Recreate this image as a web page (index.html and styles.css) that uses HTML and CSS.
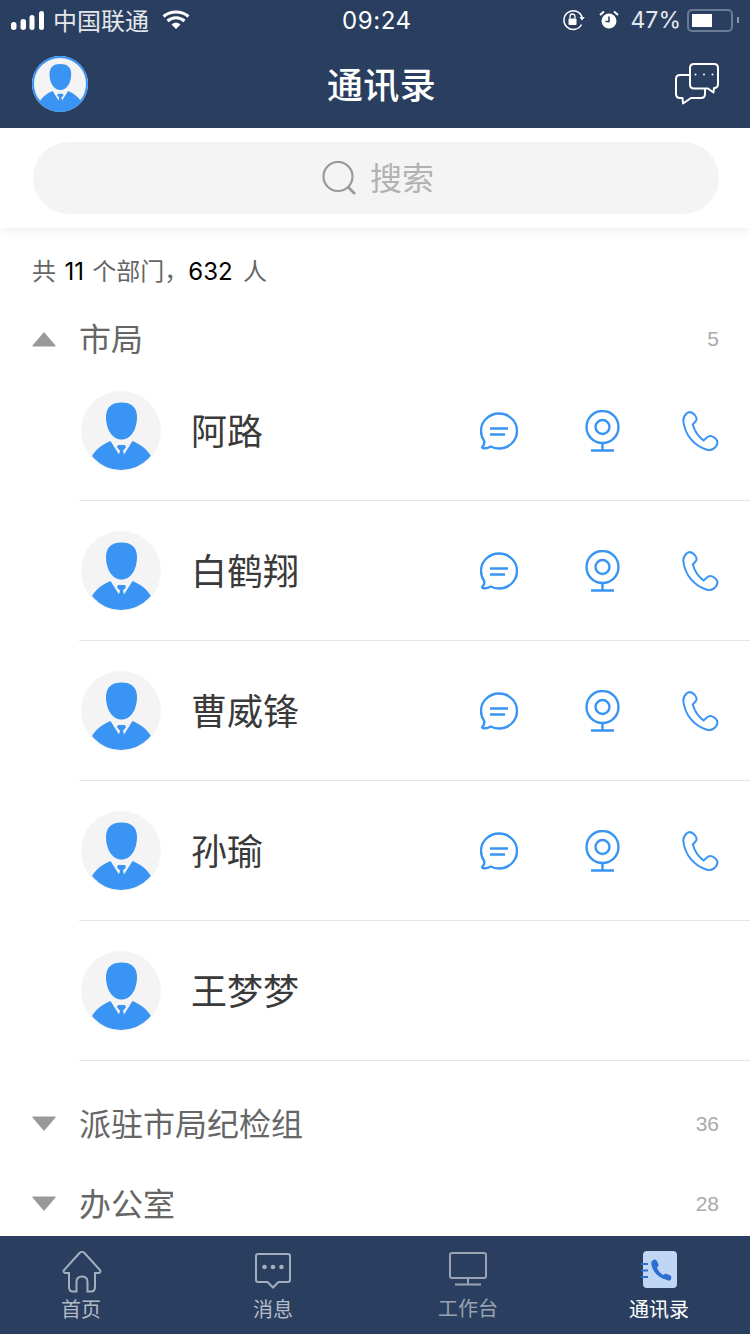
FILE: index.html
```html
<!DOCTYPE html>
<html lang="zh-CN">
<head>
<meta charset="utf-8">
<title>通讯录</title>
<link rel="stylesheet" href="styles.css">
</head>
<body>
<svg class="defs" width="0" height="0" aria-hidden="true">
  <defs>
    <clipPath id="avatar-clip"><circle cx="40" cy="40" r="39"/></clipPath>
    <symbol id="avatar" viewBox="0 0 80 80">
      <circle cx="40" cy="40" r="40" fill="#f4f4f5"/>
      <g clip-path="url(#avatar-clip)">
        <path d="M25 26C25 16 31 11.500 40.500 11.500C50 11.500 56 16 56 26C56 38 50 48.500 40.500 48.500C31 48.500 25 38 25 26Z" fill="#3a94f4"/>
        <path d="M29.500 50L38 63.500L39.500 60.500H41.500L43 63.500L51.500 50C59 53 66 58 70 65C62 74 52 80 40.500 80C29 80 19 74 11 65C15 58 22 53 29.500 50Z" fill="#3a94f4"/>
        <path d="M37 54H44L45 56.500L42 59.500L43.500 66L40.500 69L37.500 66L39 59.500L36 56.500Z" fill="#3a94f4"/>
      </g>
    </symbol>
    <symbol id="chat" viewBox="0 0 38 38">
      <path d="M19 1.500C28.700 1.500 37 9 37 19C37 29 28.700 36.500 19 36.500C15.800 36.500 13 35.700 10.700 34.500C8.500 35.800 5.500 36.500 3 36C2.200 35.800 2 35 2.600 34.400C4 33 4.500 31 4.300 29.300C2.400 26.500 1 23 1 19C1 9 9.300 1.500 19 1.500Z" fill="none" stroke="#3a94f4" stroke-width="2.400"/>
      <path d="M10 16.500H28M10 22.500H25" fill="none" stroke="#3a94f4" stroke-width="2.400"/>
    </symbol>
    <symbol id="cam" viewBox="0 0 35 42">
      <circle cx="17.500" cy="17" r="16" fill="none" stroke="#3a94f4" stroke-width="2.400"/>
      <circle cx="17.500" cy="17" r="7" fill="none" stroke="#3a94f4" stroke-width="2.400"/>
      <path d="M17.500 33V40.500M6 40.500H29" fill="none" stroke="#3a94f4" stroke-width="2.400"/>
    </symbol>
    <symbol id="phone" viewBox="0 0 38 40">
      <path d="M5.500 2.500C7.500 .8 10.500 .8 12.800 3C15.500 5.500 16.500 8.500 14.500 10.500L11.800 13.500C13.500 20 17.500 25.500 22.500 29.500L26 26.500C28.500 24.300 31.500 24.800 34.500 27.500C37 29.800 37 33 34.500 36C32 38.800 29.500 39.800 26 38.800C13 35 4 24 2.300 10C2.100 7 3.500 4.500 5.500 2.500Z" fill="none" stroke="#3a94f4" stroke-width="2" stroke-linejoin="round"/>
    </symbol>
  </defs>
</svg>

<div class="page">
  <div class="top">
    <div class="status">
      <div class="status-side">
        <svg class="signal" width="34" height="20" viewBox="0 0 34 20"><rect x="0" y="12" width="5.500" height="8" rx="2.700"/><rect x="9.500" y="9" width="5.500" height="11" rx="2.700"/><rect x="18.500" y="5" width="5" height="15" rx="2.500"/><rect x="28" y="1" width="5" height="19" rx="2.500"/></svg>
        <span class="carrier">中国联通</span>
        <svg class="wifi" width="28" height="22" viewBox="0 0 28 22"><path d="M1.500 7.500C8.500 1.500 19.500 1.500 26.500 7.500M5.500 12C10.500 7.800 17.500 7.800 22.500 12" fill="none" stroke="#fff" stroke-width="3"/><path d="M9.500 15.500C12 13.300 16 13.300 18.500 15.500L14 20Z" fill="#fff"/></svg>
      </div>
      <span class="time">09:24</span>
      <div class="status-side">
        <svg class="lock" width="23" height="22" viewBox="0 0 23 22"><path d="M19.500 15.500A9.300 9.300 0 1 1 20 8" fill="none" stroke="#fff" stroke-width="1.500"/><path d="M17.500 8H22.800L20 11.500Z" fill="#fff"/><rect x="6.500" y="9.500" width="8" height="6.500" rx="1" fill="#fff"/><path d="M8 9.500V7.500A2.500 2.500 0 0 1 13 7.500V9.500" fill="none" stroke="#fff" stroke-width="1.300"/></svg>
        <svg class="alarm" width="20" height="22" viewBox="0 0 20 22"><circle cx="10" cy="12" r="7.500" fill="#fff"/><path d="M10 7.500V12.500H6.500" fill="none" stroke="#2a3f5f" stroke-width="1.600"/><path d="M1 6L5 2.500M19 6L15 2.500" stroke="#fff" stroke-width="2"/></svg>
        <span class="battery-pct">47%</span>
        <div class="battery"><div class="battery-fill"></div></div>
        <div class="battery-nub"></div>
      </div>
    </div>
    <div class="header">
      <svg class="header-avatar" width="56" height="56"><use href="#avatar"/><circle cx="28" cy="28" r="27" fill="none" stroke="#3a94f4" stroke-width="2"/></svg>
      <h1 class="title">通讯录</h1>
      <svg class="header-chat" width="44" height="42" viewBox="0 0 44 42"><path d="M19 1H39C41.500 1 43 2.500 43 5V21C43 23.500 41.500 25 39 25L38.500 29.500L33 25.500H19C16.500 25.500 15 24 15 21.500V5C15 2.500 16.500 1 19 1Z" fill="none" stroke="#fff" stroke-width="2" stroke-linejoin="round"/><path d="M15 12H5C2.500 12 1 13.500 1 16V31C1 33.500 2.500 35 5 35H7.500L8 40.500L16 35H26C28.500 35 30 33.500 30 31V26" fill="none" stroke="#fff" stroke-width="2" stroke-linejoin="round"/><circle cx="20.500" cy="11.500" r="1" fill="#fff"/><circle cx="29" cy="11.500" r="1" fill="#fff"/><circle cx="37.500" cy="11.500" r="1" fill="#fff"/></svg>
    </div>
  </div>

  <div class="search-wrap">
    <div class="search">
      <svg width="34" height="34" viewBox="0 0 34 34"><circle cx="16" cy="15.500" r="14.500" fill="none" stroke="#999" stroke-width="2.200"/><path d="M26 26L33 33" stroke="#999" stroke-width="2.600"/></svg>
      <span class="search-text">搜索</span>
    </div>
  </div>

  <main class="main">
    <p class="summary">共 <b class="num">11</b> 个部门，<b class="num num-last">632</b> 人</p>

    <div class="group group-open">
      <svg class="caret" width="24" height="16" viewBox="0 0 24 16"><path d="M12 1L23.500 14.500Q24 15.500 23 15.500H1Q0 15.500 .5 14.500Z" fill="#999"/></svg>
      <span class="group-name">市局</span>
      <span class="group-count">5</span>
    </div>

    <ul class="rows">
      <li class="row">
        <svg class="avatar" width="80" height="80"><use href="#avatar"/></svg>
        <span class="name">阿路</span>
        <div class="actions">
          <svg width="38" height="38"><use href="#chat"/></svg>
          <svg class="cam" width="35" height="42"><use href="#cam"/></svg>
          <svg width="38" height="40"><use href="#phone"/></svg>
        </div>
      </li>
      <li class="row">
        <svg class="avatar" width="80" height="80"><use href="#avatar"/></svg>
        <span class="name">白鹤翔</span>
        <div class="actions">
          <svg width="38" height="38"><use href="#chat"/></svg>
          <svg class="cam" width="35" height="42"><use href="#cam"/></svg>
          <svg width="38" height="40"><use href="#phone"/></svg>
        </div>
      </li>
      <li class="row">
        <svg class="avatar" width="80" height="80"><use href="#avatar"/></svg>
        <span class="name">曹威锋</span>
        <div class="actions">
          <svg width="38" height="38"><use href="#chat"/></svg>
          <svg class="cam" width="35" height="42"><use href="#cam"/></svg>
          <svg width="38" height="40"><use href="#phone"/></svg>
        </div>
      </li>
      <li class="row">
        <svg class="avatar" width="80" height="80"><use href="#avatar"/></svg>
        <span class="name">孙瑜</span>
        <div class="actions">
          <svg width="38" height="38"><use href="#chat"/></svg>
          <svg class="cam" width="35" height="42"><use href="#cam"/></svg>
          <svg width="38" height="40"><use href="#phone"/></svg>
        </div>
      </li>
      <li class="row">
        <svg class="avatar" width="80" height="80"><use href="#avatar"/></svg>
        <span class="name">王梦梦</span>
      </li>
    </ul>

    <div class="group group-closed">
      <svg class="caret" width="24" height="16" viewBox="0 0 24 16"><path d="M12 15L23.500 1.500Q24 .5 23 .5H1Q0 .5 .5 1.500Z" fill="#999"/></svg>
      <span class="group-name">派驻市局纪检组</span>
      <span class="group-count">36</span>
    </div>
    <div class="group group-closed">
      <svg class="caret" width="24" height="16" viewBox="0 0 24 16"><path d="M12 15L23.500 1.500Q24 .5 23 .5H1Q0 .5 .5 1.500Z" fill="#999"/></svg>
      <span class="group-name">办公室</span>
      <span class="group-count">28</span>
    </div>
  </main>

  <nav class="tabbar">
    <div class="tab tab-home">
      <div class="tab-icon">
        <svg width="40" height="42" viewBox="0 0 40 42"><path d="M17.500 2L2 19C1 20.500 1.800 22 3.500 22H7V36C7 39 8.500 40.500 11 40.500H14.500V31C14.500 27 17 25.500 20 25.500C23 25.500 25.500 27 25.500 31V40.500H29C31.500 40.500 33 39 33 36V22H36.500C38.200 22 39 20.500 38 19L22.500 2C21 .5 19 .5 17.500 2Z" fill="none" stroke="#a4afbe" stroke-width="2"/></svg>
      </div>
      <span class="tab-label">首页</span>
    </div>
    <div class="tab tab-msg">
      <div class="tab-icon">
        <svg width="36" height="36" viewBox="0 0 36 36"><path d="M3 1H33C34.200 1 35 1.800 35 3V27C35 28.200 34.200 29 33 29H23.500L18 34.500L12.500 29H3C1.800 29 1 28.200 1 27V3C1 1.800 1.800 1 3 1Z" fill="none" stroke="#a4afbe" stroke-width="2"/><circle cx="9.500" cy="14" r="2.300" fill="#a4afbe"/><circle cx="18" cy="14" r="2.300" fill="#a4afbe"/><circle cx="26.500" cy="14" r="2.300" fill="#a4afbe"/></svg>
      </div>
      <span class="tab-label">消息</span>
    </div>
    <div class="tab tab-work">
      <div class="tab-icon">
        <svg width="38" height="34" viewBox="0 0 38 34"><rect x="1" y="1" width="36" height="25" rx="2" fill="none" stroke="#99a3b1" stroke-width="2"/><path d="M19 26V32M6 32.500H32" fill="none" stroke="#99a3b1" stroke-width="2"/></svg>
      </div>
      <span class="tab-label">工作台</span>
    </div>
    <div class="tab tab-book">
      <div class="tab-icon">
        <svg width="36" height="38" viewBox="0 0 36 38"><rect x="2" y="0" width="34" height="37" rx="4" fill="#bfd6f5"/><path d="M0 13H7M0 19.500H7M0 26H7" stroke="#2d6ecf" stroke-width="2.200"/><path d="M12 9C13.500 8 15 8.500 16 10L17.500 13.500C17.800 14.500 17 15.500 16 16.500C17 20 20 23 22.500 24C23.500 23 25 22.500 26 23L29.500 24.500C31 25.500 30.500 28 29 29.500C27.500 29.800 25.500 28.800 21.500 27.500C15 24.500 11.500 19 10.500 14C10 12 10.500 10 12 9Z" fill="#2d6ecf"/></svg>
      </div>
      <span class="tab-label">通讯录</span>
    </div>
  </nav>
</div>
</body>
</html>
```

FILE: styles.css
```css
* {
  box-sizing: border-box;
}

html,
body {
  margin: 0;
  padding: 0;
}

body {
  font-family: "Noto Sans CJK SC", "Noto Sans", sans-serif;
  background: #fff;
}

.defs {
  display: block;
  height: 0;
}

.page {
  width: 750px;
  height: 1334px;
  display: flex;
  flex-direction: column;
  overflow: hidden;
  background: #fff;
}

.top {
  background: #2a3f5f;
  color: #fff;
}

.status {
  height: 40px;
  padding: 0 11px;
  display: flex;
  align-items: center;
  justify-content: space-between;
}

.status-side {
  display: flex;
  align-items: center;
}

.signal {
  fill: #fff;
}

.carrier {
  margin-left: 8px;
  font-size: 24px;
  line-height: 40px;
  color: #e4e7ec;
}

.wifi {
  margin-left: 13px;
}

.time {
  padding: 2px 0 0 2px;
  font-family: Inter, "Liberation Sans", sans-serif;
  font-size: 24px;
  letter-spacing: 0.6px;
  line-height: 38px;
}

.alarm {
  margin-left: 14px;
}

.battery-pct {
  margin-left: 12px;
  font-family: Inter, "Liberation Sans", sans-serif;
  font-size: 23px;
  line-height: 40px;
  color: #e4e7ec;
}

.battery {
  width: 46px;
  height: 23px;
  margin-left: 6px;
  padding: 3px;
  border: 2px solid #6a7b94;
  border-radius: 5px;
}

.battery-fill {
  width: 20px;
  height: 100%;
  background: #fff;
}

.battery-nub {
  width: 2px;
  height: 6px;
  margin-left: 4px;
  background: #8b98ab;
}

.header {
  height: 88px;
  padding: 0 31px 0 32px;
  display: flex;
  align-items: center;
  justify-content: space-between;
}

.header-avatar {
  margin-top: -1px;
}

.title {
  margin: -2px 0 0;
  font-size: 36px;
  font-weight: 500;
  letter-spacing: 0.3px;
  line-height: 50px;
}

.search-wrap {
  position: relative;
  height: 100px;
  padding: 14px 31px 14px 33px;
  background: #fff;
  box-shadow: 0 2px 10px rgba(0, 0, 0, 0.08);
}

.search {
  height: 72px;
  padding-left: 4px;
  border-radius: 36px;
  background: #f4f4f4;
  display: flex;
  align-items: center;
  justify-content: center;
  gap: 14px;
}

.search-text {
  margin-top: -4px;
  font-size: 32px;
  line-height: 44px;
  color: #b2b2b2;
}

.main {
  flex: 1;
  min-height: 0;
  overflow: hidden;
}

.summary {
  height: 88px;
  margin: 0;
  padding-left: 32px;
  font-size: 24px;
  line-height: 84px;
  word-spacing: 3px;
  color: #666;
}

.num {
  font-family: Inter, "Liberation Sans", sans-serif;
  font-weight: 400;
  color: #000;
}

.num-last {
  margin-right: 2px;
}

.group {
  padding: 0 31px 0 32px;
  display: flex;
  align-items: center;
}

.group-open {
  height: 45px;
}

.group-closed {
  height: 80px;
}

.rows + .group {
  margin-top: 23px;
}

.group-name {
  margin: -4px 0 0 23px;
  font-size: 32px;
  line-height: 44px;
  color: #666;
}

.group-count {
  margin-left: auto;
  font-family: "Liberation Sans", Arial, sans-serif;
  font-size: 21px;
  color: #aaa;
}

.rows {
  margin: 0;
  padding: 0;
  list-style: none;
}

.row {
  height: 140px;
  margin-left: 79px;
  padding: 0 31px 0 2px;
  display: flex;
  align-items: center;
  border-bottom: 1px solid #e6e6e6;
}

.avatar {
  flex: none;
}

.name {
  margin: -4px 0 0 30px;
  font-size: 36px;
  line-height: 50px;
  color: #3a3a3a;
}

.actions {
  margin-left: auto;
  display: flex;
  align-items: center;
  gap: 67px;
}

.cam {
  margin-right: -6px;
}

.tabbar {
  flex: none;
  height: 98px;
  padding: 15px 0 0 51px;
  display: flex;
  background: #2a3f5f;
}

.tab {
  width: 60px;
  display: flex;
  flex-direction: column;
  align-items: center;
}

.tab-icon {
  height: 42px;
  display: flex;
  align-items: flex-start;
  justify-content: center;
}

.tab-label {
  margin-top: -1px;
  font-size: 20px;
  line-height: 34px;
  white-space: nowrap;
  color: #b3bbc7;
}

.tab-home .tab-icon {
  padding-left: 2px;
}

.tab-msg {
  margin-left: 132px;
}

.tab-msg .tab-icon {
  padding-top: 2px;
}

.tab-work {
  margin-left: 135px;
}

.tab-work .tab-icon {
  padding-top: 1px;
}

.tab-work .tab-label {
  margin-top: -2px;
  color: #99a3b1;
}

.tab-book {
  margin-left: 131px;
}

.tab-book .tab-label {
  color: #fff;
}
```
